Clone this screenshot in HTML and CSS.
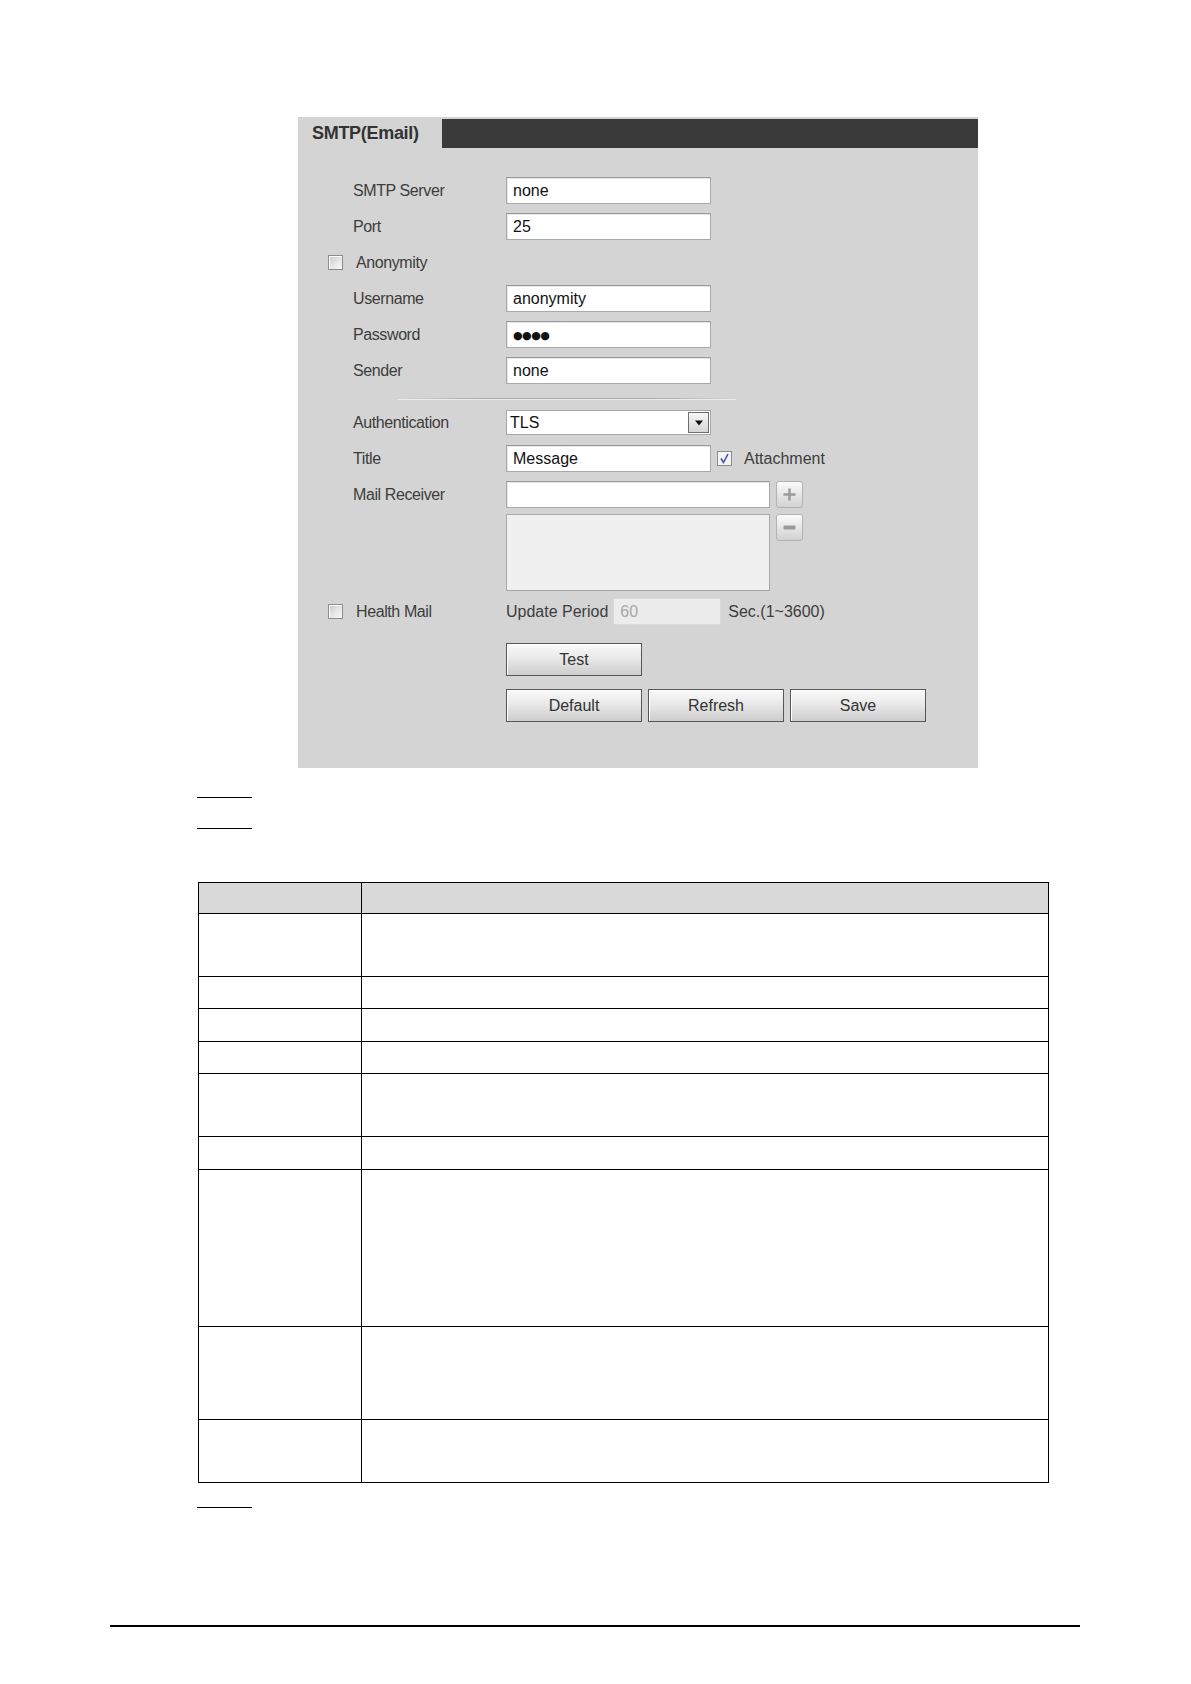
FILE: index.html
```html
<!DOCTYPE html>
<html>
<head>
<meta charset="utf-8">
<title>SMTP(Email)</title>
<link rel="stylesheet" href="styles.css">
</head>
<body>
<div class="page">
  <div class="panel">
    <div class="panel-head">
      <div class="tab">SMTP(Email)</div>
      <div class="bar"></div>
    </div>
    <div class="form">
      <div class="row"><span class="lbl">SMTP Server</span><div class="field">none</div></div>
      <div class="row"><span class="lbl">Port</span><div class="field">25</div></div>
      <div class="row"><span class="cb"></span><span class="cb-lbl">Anonymity</span></div>
      <div class="row"><span class="lbl">Username</span><div class="field">anonymity</div></div>
      <div class="row"><span class="lbl">Password</span><div class="field"><span class="dots">●●●●</span></div></div>
      <div class="row"><span class="lbl">Sender</span><div class="field">none</div></div>
      <div class="sep"></div>
      <div class="row row-auth"><span class="lbl">Authentication</span>
        <div class="select"><span class="sel-text">TLS</span><span class="arrow"><svg width="10" height="6" viewBox="0 0 10 6"><path d="M1 0.5 L9 0.5 L5 5.5 Z" fill="#111"/></svg></span></div>
      </div>
      <div class="row"><span class="lbl">Title</span><div class="field">Message</div>
        <span class="cb cb-checked"><svg width="13" height="13" viewBox="0 0 13 13"><path d="M3 6.5 L5.5 10.5 L10 2" fill="none" stroke="#3b56a8" stroke-width="1.6"/></svg></span>
        <span class="after">Attachment</span>
      </div>
      <div class="row row-recv"><span class="lbl">Mail Receiver</span><div class="field field-wide"></div>
        <span class="sq-btn"><svg width="15" height="15" viewBox="0 0 15 15"><path d="M7.5 1.5 V13.5 M1.5 7.5 H13.5" stroke="#9a9a9a" stroke-width="2.4"/></svg></span>
      </div>
      <div class="row-area"><span class="lbl"></span><div class="area"></div>
        <span class="sq-btn"><svg width="15" height="15" viewBox="0 0 15 15"><rect x="1.5" y="5.5" width="12" height="4" rx="1" fill="#9a9a9a"/></svg></span>
      </div>
      <div class="row row-health"><span class="cb"></span><span class="cb-lbl">Health Mail</span>
        <span class="txt">Update Period</span><div class="field field-dis">60</div><span class="after2">Sec.(1~3600)</span>
      </div>
      <div class="btn-row btn-row-test"><button class="btn">Test</button></div>
      <div class="btn-row"><button class="btn">Default</button><button class="btn">Refresh</button><button class="btn">Save</button></div>
    </div>
  </div>

  <div class="step step-1"></div>
  <div class="step step-2"></div>

  <table class="params">
    <tr class="h-head"><th class="c1"></th><th class="c2"></th></tr>
    <tr class="h2"><td></td><td></td></tr>
    <tr class="h1"><td></td><td></td></tr>
    <tr class="h1b"><td></td><td></td></tr>
    <tr class="h1"><td></td><td></td></tr>
    <tr class="h2"><td></td><td></td></tr>
    <tr class="h1b"><td></td><td></td></tr>
    <tr class="h5"><td></td><td></td></tr>
    <tr class="h3"><td></td><td></td></tr>
    <tr class="h2b"><td></td><td></td></tr>
  </table>

  <div class="step step-3"></div>

  <div class="footer-line"></div>
</div>
</body>
</html>
```

FILE: styles.css
```css
html, body {
  margin: 0;
  padding: 0;
  background: #ffffff;
}

.page {
  width: 1191px;
  padding-top: 117px;
  padding-bottom: 40px;
  font-family: "Liberation Sans", Arial, sans-serif;
}

/* ---------- panel ---------- */
.panel {
  margin-left: 298px;
  width: 680px;
  background: #d4d4d4;
  padding-bottom: 46px;
}

.panel-head {
  display: flex;
  height: 31px;
}

.tab {
  width: 144px;
  padding-left: 14px;
  box-sizing: border-box;
  font-weight: bold;
  font-size: 18px;
  color: #333333;
  line-height: 32px;
  letter-spacing: -0.3px;
}

.bar {
  flex: 1;
  margin-top: 2px;
  height: 29px;
  background: #3a3a3a;
}

.form {
  padding-top: 29px;
}

.row {
  display: flex;
  align-items: center;
  height: 27px;
  margin-bottom: 9px;
  font-size: 16px;
  color: #3d3d3d;
}

.lbl {
  margin-left: 55px;
  width: 153px;
  flex: none;
  font-size: 16px;
  letter-spacing: -0.4px;
}

.cb {
  margin-left: 30px;
  width: 13px;
  height: 13px;
  flex: none;
  border: 1px solid #8c8c8c;
  background: linear-gradient(135deg, #c9c9c9 0%, #e9e9e9 60%, #f7f7f7 100%);
  box-shadow: inset 1px 1px 0 #ffffff;
}

.cb-checked {
  margin-left: 6px;
  background: #f4f4f4;
  box-shadow: none;
  display: flex;
  align-items: center;
  justify-content: center;
}

.cb-lbl {
  margin-left: 13px;
  width: 150px;
  flex: none;
  font-size: 16px;
  letter-spacing: -0.4px;
}

.field {
  width: 205px;
  height: 27px;
  box-sizing: border-box;
  flex: none;
  background: #ffffff;
  border: 1px solid #a8a8a8;
  border-top-color: #9a9a9a;
  box-shadow: inset 1px 1px 0 #e6e6e6;
  padding-left: 6px;
  font-size: 16px;
  color: #111;
  line-height: 25px;
}

.dots {
  font-family: "DejaVu Sans", sans-serif;
  font-size: 11px;
  letter-spacing: -0.5px;
  vertical-align: 1px;
}

.field-wide {
  width: 264px;
}

.field-dis {
  width: 108px;
  margin-left: 5px;
  background: #ececec;
  border-color: #d8d8d8;
  box-shadow: none;
  color: #a8a8a8;
}

.after {
  margin-left: 12px;
}

.after2 {
  margin-left: 7px;
}

.txt {
  flex: none;
}

.sep {
  margin-top: 14px;
  margin-left: 100px;
  width: 338px;
  height: 1px;
  background: linear-gradient(to right, rgba(160,160,160,0) 0%, #a9a9a9 25%, #a9a9a9 75%, rgba(160,160,160,0) 100%);
  box-shadow: 0 1px 0 #ececec;
}

.row-auth {
  margin-top: 10px;
}

.select {
  width: 205px;
  height: 25px;
  box-sizing: border-box;
  background: #ffffff;
  border: 1px solid #a8a8a8;
  display: flex;
  align-items: center;
  justify-content: space-between;
  font-size: 16px;
  color: #111;
}

.sel-text {
  padding-left: 3px;
}

.arrow {
  width: 21px;
  height: 21px;
  margin-right: 1px;
  box-sizing: border-box;
  border: 1px solid #6e6e6e;
  background: linear-gradient(#f6f6f6, #d6d6d6);
  display: flex;
  align-items: center;
  justify-content: center;
}

.sq-btn {
  margin-left: 6px;
  width: 27px;
  height: 27px;
  box-sizing: border-box;
  flex: none;
  border: 1px solid #b2b2b2;
  border-radius: 3px;
  background: linear-gradient(#fbfbfb, #e2e2e2 60%, #d2d2d2);
  display: flex;
  align-items: center;
  justify-content: center;
}

.row-recv {
  margin-bottom: 6px;
}

.row-area {
  display: flex;
  align-items: flex-start;
  margin-bottom: 7px;
}

.area {
  width: 264px;
  height: 77px;
  box-sizing: border-box;
  flex: none;
  background: #f0f0f0;
  border: 1px solid #a8a8a8;
}

.btn-row {
  display: flex;
  gap: 6px;
  margin-left: 208px;
}

.btn-row-test {
  margin-top: 18px;
  margin-bottom: 13px;
}

.btn {
  width: 136px;
  height: 33px;
  box-sizing: border-box;
  border: 1px solid #575757;
  background: linear-gradient(#fafafa 0%, #e9e9e9 45%, #cdcdcd 100%);
  box-shadow: inset 1px 1px 0 #ffffff;
  font-family: "Liberation Sans", Arial, sans-serif;
  font-size: 16px;
  color: #333;
  padding: 0;
}

/* ---------- doc elements ---------- */
.step {
  margin-left: 197px;
  width: 55px;
  height: 1px;
  background: #000;
}

.step-1 { margin-top: 29px; }
.step-2 { margin-top: 30px; }
.step-3 { margin-top: 24px; }

.params {
  margin-top: 53px;
  margin-left: 198px;
  width: 851px;
  border-collapse: collapse;
  table-layout: fixed;
}

.params th,
.params td {
  border: 1px solid #000;
  padding: 0;
}

.params th {
  background: #d9d9d9;
}

.c1 { width: 162px; }

.h-head { height: 31px; }
.h1 { height: 32px; }
.h1b { height: 33px; }
.h2 { height: 63px; }
.h2b { height: 63px; }
.h3 { height: 93px; }
.h5 { height: 157px; }

.footer-line {
  margin-top: 117px;
  margin-left: 110px;
  width: 970px;
  height: 2px;
  background: #000;
}
```
